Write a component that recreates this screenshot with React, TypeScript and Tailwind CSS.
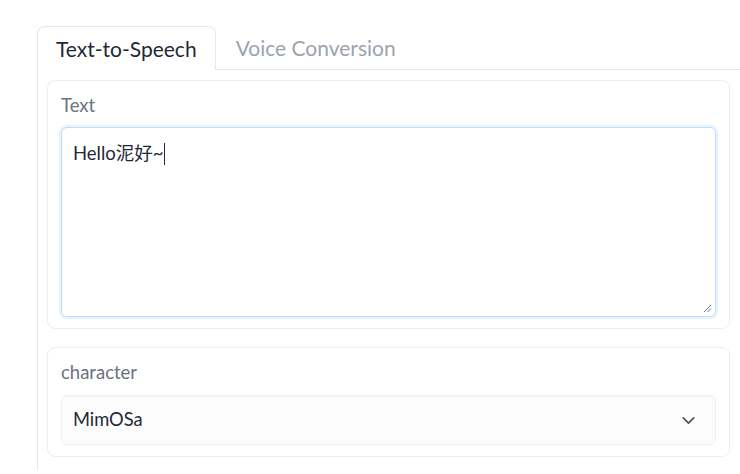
import { ChevronDown } from "lucide-react"

const font = { fontFamily: '"Lato", "Noto Sans CJK SC", sans-serif' }

function ResizeGrip() {
  return (
    <svg width="10" height="10" viewBox="0 0 10 10" className="absolute right-[3px] bottom-[3px]">
      <line x1="9" y1="2" x2="2" y2="9" stroke="#6b7280" strokeWidth="1" />
      <line x1="9" y1="5.5" x2="5.5" y2="9" stroke="#6b7280" strokeWidth="1" />
    </svg>
  )
}

export default function App() {
  return (
    <div className="w-[740px] h-[474px] bg-white overflow-hidden pl-[37px] pt-[26px]" style={font}>
      {/* Tabs */}
      <div className="flex border-b border-[#e5e7eb] h-[44px]">
        <div className="h-[44px] -mb-px bg-white border border-b-0 border-[#e5e7eb] rounded-t-lg px-[18px] flex items-center text-[21px] text-[#1f2937]">
          Text-to-Speech
        </div>
        <div className="h-[43px] px-[20px] flex items-center text-[21px] text-[#9ca3af]">
          Voice Conversion
        </div>
      </div>

      {/* Panel */}
      <div className="border-l border-[#e5e7eb] pl-[9px] pt-[10px] pr-[10px] h-[400px] flex flex-col gap-[18px]">
        <div className="border border-[#eeeeee] rounded-lg px-[13px] pt-[12px] pb-[11px]">
          <div className="text-[18.5px] leading-[24px] text-[#6b7280] mb-[10px]">Text</div>
          <div className="relative h-[190px] rounded-md border border-[#bfdbfe] shadow-[0_0_0_2px_#e8f1fe] px-[11px] pt-[13px] text-[18.5px] leading-[24px] text-[#1f2937]">
            Hello泥好~<span className="inline-block w-px h-[22px] bg-[#1f2937] align-[-5px]" />
            <ResizeGrip />
          </div>
        </div>

        <div className="border border-[#eeeeee] rounded-lg px-[13px] pt-[12px] pb-[11px]">
          <div className="text-[18.5px] leading-[24px] text-[#6b7280] mb-[11px]">character</div>
          <div className="h-[50px] rounded-md border border-[#f0f0f0] bg-[#fcfcfc] shadow-[inset_0_1px_2px_rgba(0,0,0,0.03)] flex items-center justify-between pl-[11px] pr-[16px] text-[18.3px] text-[#1f2937]">
            <span>MimOSa</span>
            <ChevronDown size={21} strokeWidth={2} className="text-[#4b5563]" />
          </div>
        </div>
      </div>
    </div>
  )
}
